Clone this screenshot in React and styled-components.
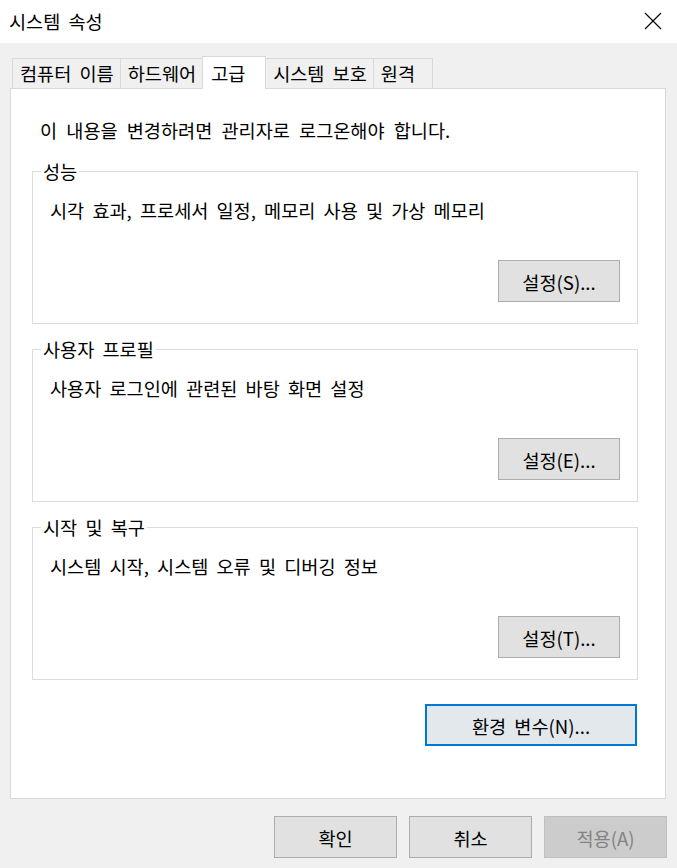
import React from 'react'
import styled, { createGlobalStyle, css } from 'styled-components'

const GlobalStyle = createGlobalStyle`
  html, body {
    margin: 0;
    padding: 0;
    background: #f0f0f0;
  }
  body {
    font-family: 'Noto Sans CJK KR', 'Noto Sans', sans-serif;
    font-size: 18.6px;
    word-spacing: 4px;
    color: #000;
  }
  * {
    box-sizing: border-box;
  }
`

const tabs = ['컴퓨터 이름', '하드웨어', '고급', '시스템 보호', '원격']

const groups = [
  {
    title: '성능',
    text: '시각 효과, 프로세서 일정, 메모리 사용 및 가상 메모리',
    button: '설정(S)...',
  },
  {
    title: '사용자 프로필',
    text: '사용자 로그인에 관련된 바탕 화면 설정',
    button: '설정(E)...',
  },
  {
    title: '시작 및 복구',
    text: '시스템 시작, 시스템 오류 및 디버깅 정보',
    button: '설정(T)...',
  },
]

const App = () => {
  return (
    <>
      <GlobalStyle />
      <Window>
        <TitleBar>
          <span>시스템 속성</span>
          <CloseIcon width='18' height='18' viewBox='0 0 18 18'>
            <path d='M1 1 L17 17 M17 1 L1 17' />
          </CloseIcon>
        </TitleBar>
        <Body>
          <TabStrip>
            {tabs.map((tab, index) => (
              <Tab key={index} $active={index === 2}>
                {tab}
              </Tab>
            ))}
          </TabStrip>
          <Panel>
            <Notice>이 내용을 변경하려면 관리자로 로그온해야 합니다.</Notice>
            {groups.map((group, index) => (
              <Group key={index}>
                <Legend>{group.title}</Legend>
                <Description>{group.text}</Description>
                <ButtonRow>
                  <Button $width={122}>{group.button}</Button>
                </ButtonRow>
              </Group>
            ))}
            <EnvButton>환경 변수(N)...</EnvButton>
          </Panel>
          <Footer>
            <Button $width={123}>확인</Button>
            <Button $width={123}>취소</Button>
            <Button $width={123} disabled>
              적용(A)
            </Button>
          </Footer>
        </Body>
      </Window>
    </>
  )
}

const Window = styled.div`
  width: 677px;
  height: 868px;
  display: flex;
  flex-direction: column;
  background: #f0f0f0;
`

const TitleBar = styled.div`
  height: 43px;
  flex: none;
  background: #fff;
  display: flex;
  align-items: center;
  justify-content: space-between;
  padding: 0 15px 2px 9px;
  line-height: 24px;
`

const CloseIcon = styled.svg`
  stroke: #000;
  stroke-width: 1.1;
  fill: none;
`

const Body = styled.div`
  flex: 1;
  padding: 13px 10px 0 10px;
`

const TabStrip = styled.div`
  display: flex;
  align-items: flex-end;
  height: 33px;
  margin-bottom: -1px;
  padding-left: 2px;
  position: relative;
  z-index: 1;
`

const Tab = styled.div`
  height: 30px;
  min-width: 60px;
  margin-bottom: 1px;
  margin-left: -1px;
  padding: 0 6px 0 7px;
  border: 1px solid #d9d9d9;
  border-bottom: none;
  background: #f0f0f0;
  line-height: 28px;
  white-space: nowrap;
  &:first-child {
    margin-left: 0;
  }
  ${(props) =>
    props.$active &&
    css`
      height: 33px;
      min-width: 64px;
      margin-bottom: 0;
      padding: 0 6px 3px 8px;
      background: #fff;
      line-height: 31px;
    `}
`

const Panel = styled.div`
  height: 711px;
  width: 656px;
  border: 1px solid #d9d9d9;
  background: #fff;
  padding: 29px 27px 0 21px;
  display: flex;
  flex-direction: column;
`

const Notice = styled.div`
  line-height: 24px;
  padding-left: 8px;
  margin-bottom: 17px;
  word-spacing: 5px;
`

const Group = styled.fieldset`
  margin: 0 0 13px 0;
  padding: 15px 17px 21px 17px;
  border: 1px solid #dcdcdc;
  min-width: 0;
`

const Legend = styled.legend`
  margin-left: -9px;
  padding: 0 2px;
  line-height: 24px;
`

const Description = styled.div`
  line-height: 24px;
`

const ButtonRow = styled.div`
  display: flex;
  justify-content: flex-end;
  margin-top: 38px;
`

const Button = styled.button`
  width: ${(props) => props.$width}px;
  height: 42px;
  padding: 0;
  border: 1px solid #adadad;
  background: #e1e1e1;
  font: inherit;
  word-spacing: inherit;
  color: #000;
  &:disabled {
    background: #cccccc;
    border-color: #bfbfbf;
    color: #838383;
  }
`

const EnvButton = styled(Button)`
  align-self: flex-end;
  width: 212px;
  margin: 11px 1px 0 0;
  border: 2px solid #0078d7;
  background: #e3e8ed;
`

const Footer = styled.div`
  display: flex;
  justify-content: flex-end;
  gap: 12px;
  padding-top: 17px;
`

export default App
